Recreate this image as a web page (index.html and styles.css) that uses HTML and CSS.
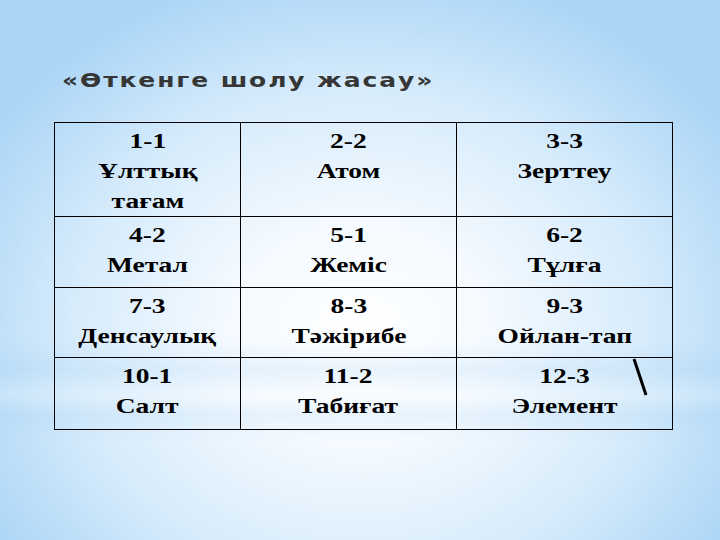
FILE: index.html
```html
<!DOCTYPE html>
<html lang="kk">
<head>
<meta charset="utf-8">
<title>Өткенге шолу жасау</title>
<link rel="stylesheet" href="styles.css">
</head>
<body>
<div class="slide">
  <h1 class="title"><span class="wide">«Өткенге шолу жасау»</span></h1>
  <table class="grid">
    <colgroup><col class="c1"><col class="c2"><col class="c3"></colgroup>
    <tr class="r1">
      <td><span class="txt">1-1<br>Ұлттық<br>тағам</span></td>
      <td><span class="txt">2-2<br>Атом</span></td>
      <td><span class="txt">3-3<br>Зерттеу</span></td>
    </tr>
    <tr class="r2">
      <td><span class="txt">4-2<br>Метал</span></td>
      <td><span class="txt">5-1<br>Жеміс</span></td>
      <td><span class="txt">6-2<br>Тұлға</span></td>
    </tr>
    <tr class="r3">
      <td><span class="txt">7-3<br>Денсаулық</span></td>
      <td><span class="txt">8-3<br>Тәжірибе</span></td>
      <td><span class="txt">9-3<br>Ойлан-тап</span></td>
    </tr>
    <tr class="r4">
      <td><span class="txt">10-1<br>Салт</span></td>
      <td><span class="txt">11-2<br>Табиғат</span></td>
      <td class="marked"><span class="txt">12-3<br>Элемент</span>
        <svg class="slash" width="20" height="40" viewBox="0 0 20 40"><line x1="3" y1="2" x2="15" y2="38" stroke="#000" stroke-width="3"/></svg>
      </td>
    </tr>
  </table>
</div>
</body>
</html>
```
FILE: styles.css
```css
html, body {
  margin: 0;
  padding: 0;
}
body {
  width: 720px;
  height: 540px;
  overflow: hidden;
  background:
    linear-gradient(180deg, rgba(255,255,255,0) 0px, rgba(255,255,255,0) 340px, rgba(150,200,240,0.18) 370px, rgba(255,255,255,0.15) 395px, rgba(150,200,240,0.15) 415px, rgba(255,255,255,0) 440px),
    radial-gradient(ellipse 62% 70% at 50% 62%, #ffffff 0%, #f4faff 30%, #d6ebfb 65%, #a9d4f6 100%);
}
.slide {
  padding: 68px 0 0 54px;
}
.title {
  margin: 0 0 30px 8px;
  font-family: "DejaVu Sans", Verdana, sans-serif;
  font-weight: bold;
  font-size: 20px;
  line-height: 24px;
  color: #363636;
}
.wide {
  display: inline-block;
  letter-spacing: 1.5px;
  transform: scaleX(1.25);
  transform-origin: 0 50%;
}
.grid {
  border-collapse: collapse;
  width: 618px;
  table-layout: fixed;
}
.c1 { width: 186px; }
.c2 { width: 216px; }
.c3 { width: 216px; }
.grid td {
  border: 1px solid #000;
  padding: 3px 0 0 0;
  vertical-align: top;
  text-align: center;
  font-family: "Liberation Serif", "Times New Roman", serif;
  font-weight: bold;
  font-size: 22px;
  line-height: 30px;
  color: #000;
}
.txt {
  display: inline-block;
  transform: scaleX(1.25);
}
.r1 td { height: 88px; }
.r2 td { height: 67px; }
.r3 td { height: 66px; }
.r4 td { height: 68px; }
.marked { position: relative; }
.slash {
  position: absolute;
  left: 174px;
  top: -1px;
}
```
